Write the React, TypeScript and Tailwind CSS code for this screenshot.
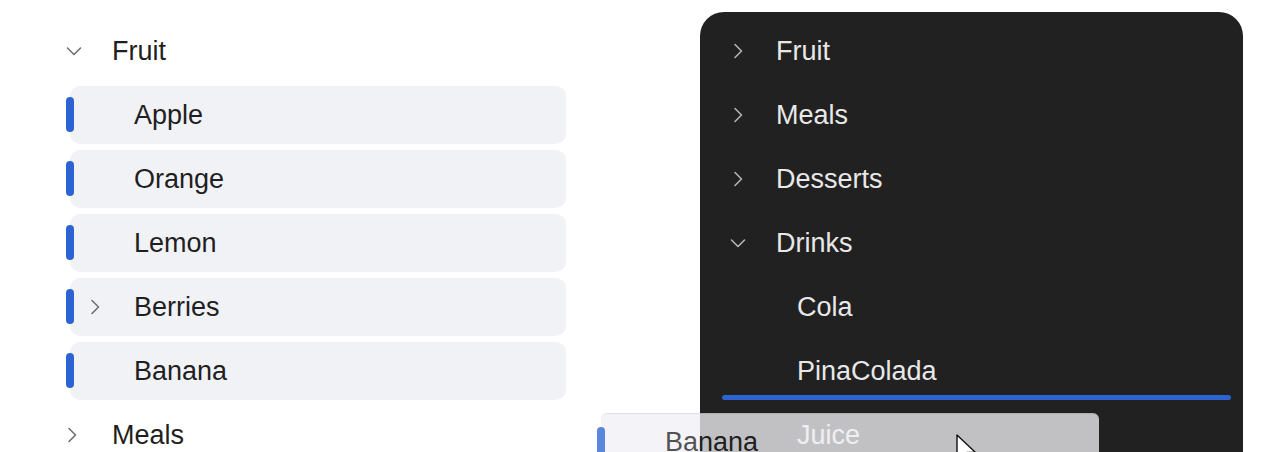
import React from "react";

const font = { fontFamily: '"Liberation Sans", Arial, sans-serif' };

function ChevronRight({ className = "" }: { className?: string }) {
  return (
    <svg width="10" height="16" viewBox="0 0 10 16" className={className} fill="none">
      <path d="M2 1.5 L8.5 8 L2 14.5" stroke="currentColor" strokeWidth="1.6" strokeLinecap="round" strokeLinejoin="round" />
    </svg>
  );
}

function ChevronDown({ className = "" }: { className?: string }) {
  return (
    <svg width="16" height="10" viewBox="0 0 16 10" className={className} fill="none">
      <path d="M1.5 2 L8 8.5 L14.5 2" stroke="currentColor" strokeWidth="1.6" strokeLinecap="round" strokeLinejoin="round" />
    </svg>
  );
}

const fruits = ["Apple", "Orange", "Lemon", "Berries", "Banana"];

function FruitRow({ name }: { name: string }) {
  return (
    <div className="relative h-16 shrink-0 flex items-center">
      <div className="ml-[26px] h-[58px] flex-1 rounded-[10px] bg-[#f1f2f6] flex items-center relative">
        {name === "Berries" && (
          <ChevronRight className="absolute left-[20px] text-[#707070]" />
        )}
        <span className="pl-[64px] text-[27px] text-[#1f1f1f] leading-none">{name}</span>
      </div>
      <div className="absolute left-[22px] top-[14px] w-2 h-[35px] rounded-full bg-[#2b63d3]" />
    </div>
  );
}

export default function App() {
  const right = [
    { name: "Fruit", open: false },
    { name: "Meals", open: false },
    { name: "Desserts", open: false },
    { name: "Drinks", open: true },
  ];

  return (
    <div className="relative w-[1280px] h-[452px] overflow-hidden bg-white flex items-start" style={font}>
      {/* light tree */}
      <div className="ml-[44px] w-[522px] pt-[19px] flex flex-col shrink-0">
        <div className="h-16 shrink-0 flex items-center pl-[22px]">
          <ChevronDown className="text-[#707070]" />
          <span className="ml-[30px] text-[27px] text-[#1f1f1f] leading-none">Fruit</span>
        </div>
        {fruits.map((f) => (
          <FruitRow key={f} name={f} />
        ))}
        <div className="h-16 shrink-0 flex items-center pl-[23px]">
          <ChevronRight className="text-[#707070]" />
          <span className="ml-[35px] text-[27px] text-[#1f1f1f] leading-none">Meals</span>
        </div>
      </div>

      {/* dark tree */}
      <div className="ml-[134px] mt-[12px] w-[543px] h-[470px] shrink-0 rounded-t-[24px] bg-[#212121] pt-[7px] flex flex-col">
        {right.map((r) => (
          <div key={r.name} className="h-16 shrink-0 flex items-center pl-[30px]">
            <div className="w-[16px] flex justify-center">
              {r.open ? (
                <ChevronDown className="text-[#b5b5b5]" />
              ) : (
                <ChevronRight className="text-[#b5b5b5]" />
              )}
            </div>
            <span className="ml-[30px] text-[27px] text-[#e8e8e8] leading-none">{r.name}</span>
          </div>
        ))}
        <div className="h-16 shrink-0 flex items-center pl-[97px]">
          <span className="text-[27px] text-[#e8e8e8] leading-none">Cola</span>
        </div>
        <div className="relative h-16 shrink-0 flex items-center pl-[97px]">
          <span className="text-[27px] text-[#e8e8e8] leading-none">PinaColada</span>
          <div className="absolute left-[22px] right-[12px] bottom-[3px] h-[5px] rounded-full bg-[#2d63d1]" />
        </div>
        <div className="h-16 shrink-0 flex items-center pl-[97px]">
          <span className="text-[27px] text-[#e8e8e8] leading-none">Juice</span>
        </div>
      </div>

      {/* drag ghost */}
      <div className="absolute left-[601px] top-[413px] w-[498px] h-[58px] opacity-[0.77]">
        <div className="h-full rounded-[6px] bg-[#f1f2f6] border-t border-[#9a9a9a]/30 flex items-center">
          <span className="pl-[64px] text-[27px] text-[#1f1f1f] leading-none">Banana</span>
        </div>
        <div className="absolute -left-[4px] top-[14px] w-2 h-[35px] rounded-full bg-[#2b63d3]" />
      </div>

      {/* cursor */}
      <svg className="absolute left-[955px] top-[433px]" width="24" height="34" viewBox="0 0 24 34">
        <path d="M2 2 L2 27 L8 21 L12 30.5 L16 29 L12 19.5 L20.5 19.5 Z" fill="#ffffff" stroke="#111111" strokeWidth="1.4" strokeLinejoin="round" />
      </svg>
    </div>
  );
}
